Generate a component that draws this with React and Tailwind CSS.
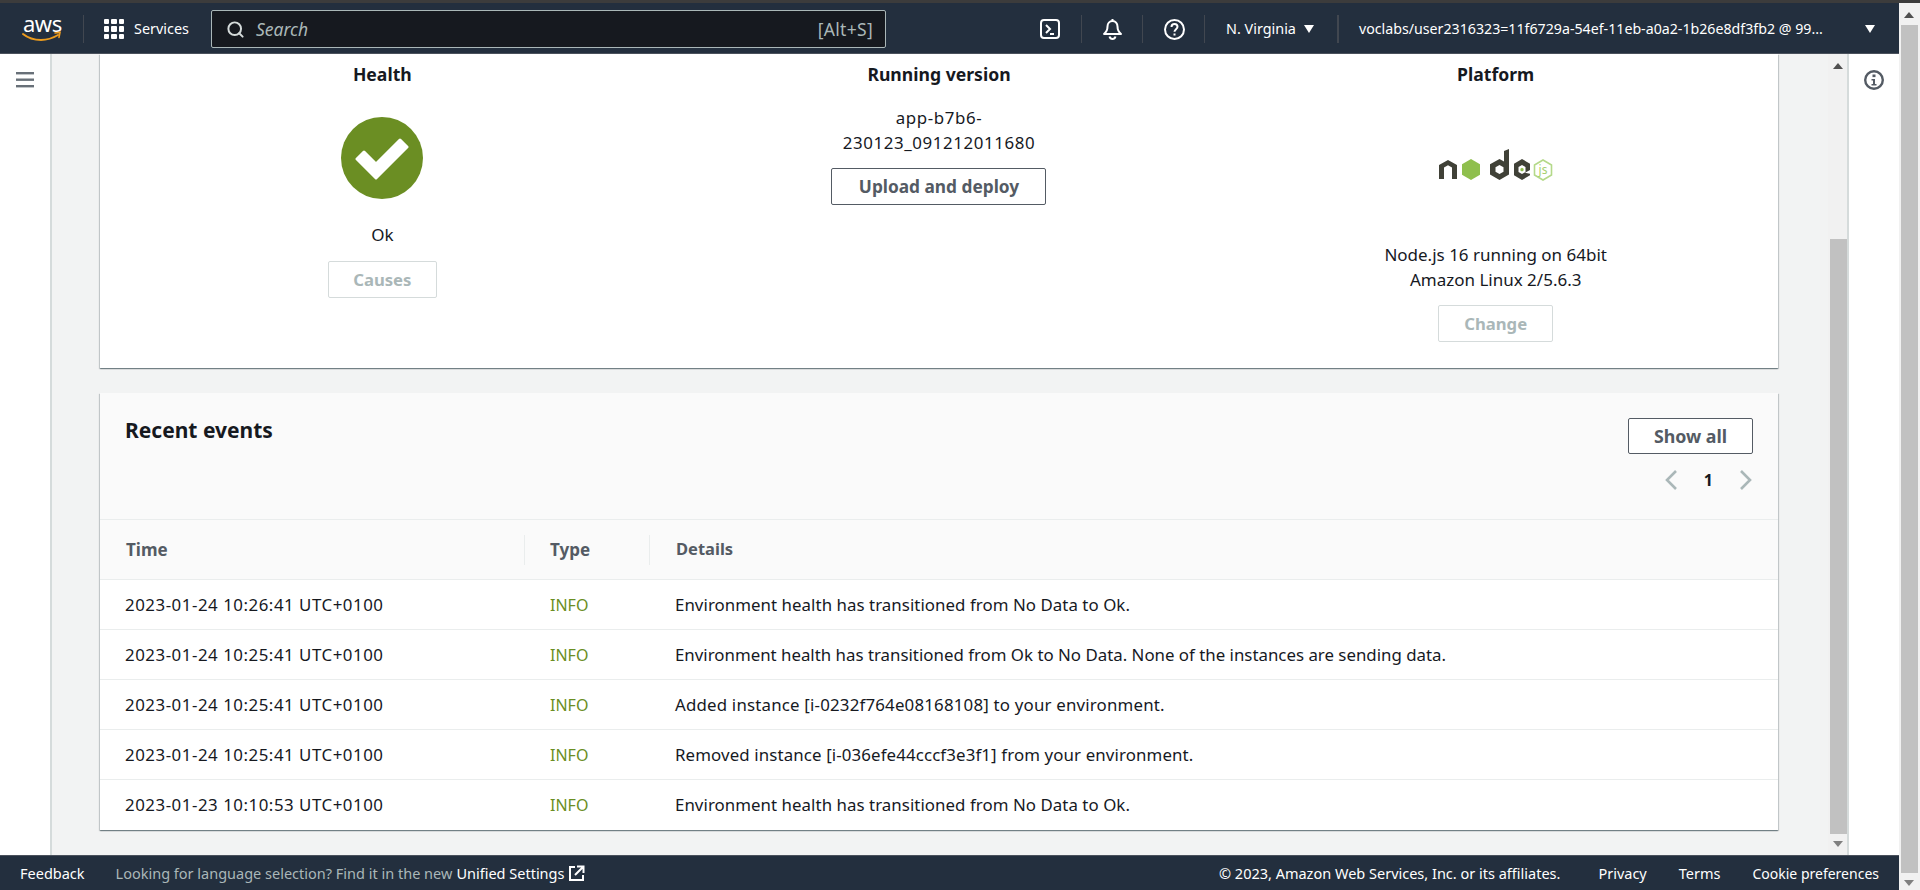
import { Search } from 'lucide-react'

const FONT = "font-['Noto_Sans','Open_Sans',sans-serif]"
const CARD_SHADOW = 'shadow-[0_1px_1px_0_rgba(0,28,36,0.35),1px_1px_1px_0_rgba(0,28,36,0.15),-1px_1px_1px_0_rgba(0,28,36,0.15)]'

const EVENTS = [
  ['2023-01-24 10:26:41 UTC+0100', 'Environment health has transitioned from No Data to Ok.', 'tracking-[0.05px]'],
  ['2023-01-24 10:25:41 UTC+0100', 'Environment health has transitioned from Ok to No Data. None of the instances are sending data.', ''],
  ['2023-01-24 10:25:41 UTC+0100', 'Added instance [i-0232f764e08168108] to your environment.', 'tracking-[0.19px]'],
  ['2023-01-24 10:25:41 UTC+0100', 'Removed instance [i-036efe44cccf3e3f1] from your environment.', 'tracking-[0.12px]'],
  ['2023-01-23 10:10:53 UTC+0100', 'Environment health has transitioned from No Data to Ok.', 'tracking-[0.05px]'],
]

function AwsLogo() {
  return (
    <div className="relative h-[30px] w-[40px]">
      <span className="absolute left-[1px] top-[-6px] text-[22px] leading-[30px] tracking-[-0.5px] text-white">aws</span>
      <svg className="absolute left-0 top-[17px]" width="40" height="13" viewBox="0 0 40 13" fill="none">
        <path d="M1 3c5 4 11 6 18 6 6 0 12-2 17-5" stroke="#ec9c1e" strokeWidth="2" strokeLinecap="round" />
        <path d="M33 2l5-.6-1 5" stroke="#ec9c1e" strokeWidth="1.6" strokeLinecap="round" />
      </svg>
    </div>
  )
}

function GridIcon() {
  return (
    <div className="grid h-[20px] w-[20px] grid-cols-3 gap-[2px]">
      {[0, 1, 2, 3, 4, 5, 6, 7, 8].map(i => (
        <span key={i} className="rounded-[1px] bg-white" />
      ))}
    </div>
  )
}

function Caret({ className }) {
  return (
    <svg className={className} width="10" height="8" viewBox="0 0 10 8">
      <path d="M0 0h10L5 8z" fill="#fff" />
    </svg>
  )
}

function Divider({ className }) {
  return <span className={`h-[28px] w-px bg-[#414750] ${className}`} />
}

function TopBar() {
  return (
    <header className="flex h-[51px] shrink-0 items-center border-b border-[#4a515c] bg-[#232f3e] pt-[2px] text-[14.4px] text-white">
      <div className="ml-[22px]"><AwsLogo /></div>
      <Divider className="ml-[21px]" />
      <div className="ml-[20px]"><GridIcon /></div>
      <span className="ml-[10px] w-[57px] whitespace-nowrap">Services</span>
      <div className="ml-[20px] flex h-[38px] w-[675px] items-center rounded-[2px] border border-[#aab7b8] bg-[#16191f] pl-[14px] pr-[12px] text-[17.5px] text-[#aab7b8]">
        <Search size={19} strokeWidth={2.5} className="text-[#d5dbdb]" />
        <span className="ml-[11px] italic">Search</span>
        <span className="ml-auto tracking-[0.3px]">[Alt+S]</span>
      </div>
      {/* terminal */}
      <svg className="ml-[154px]" width="20" height="20" viewBox="0 0 20 20" fill="none">
        <rect x="1" y="1" width="18" height="18" rx="3" stroke="#fff" strokeWidth="2" />
        <path d="M6 6l4 4-4 4M10 15h4" stroke="#fff" strokeWidth="2" />
      </svg>
      <Divider className="ml-[21px]" />
      {/* bell */}
      <svg className="ml-[20px]" width="21" height="22" viewBox="0 0 21 22" fill="none">
        <path d="M10.5 1v2M10.5 3c-3 0-5 2.400-5 5.500 0 3.500-1 5.500-3.500 7.500h17c-2.500-2-3.500-4-3.500-7.500C15.500 5.400 13.500 3 10.500 3z" stroke="#fff" strokeWidth="2" strokeLinejoin="round" />
        <path d="M7.500 18.500c.5 1.700 1.500 2.500 3 2.500s2.500-.8 3-2.500" stroke="#fff" strokeWidth="2" />
      </svg>
      <Divider className="ml-[19px]" />
      {/* help */}
      <svg className="ml-[21px]" width="21" height="21" viewBox="0 0 21 21" fill="none">
        <circle cx="10.500" cy="10.500" r="9.500" stroke="#fff" strokeWidth="2" />
        <path d="M7.500 8c0-2 1.300-3 3-3s3 1 3 2.800c0 2.400-3 2.400-3 5" stroke="#fff" strokeWidth="2" />
        <rect x="9.500" y="14.500" width="2" height="2" fill="#fff" />
      </svg>
      <Divider className="ml-[19px]" />
      <span className="ml-[21px] w-[71px] whitespace-nowrap">N. Virginia</span>
      <Caret className="ml-[7px]" />
      <span className="ml-[23px] h-[28px] w-[2px] bg-[#414750]" />
      <span className="ml-[20px] w-[498px] whitespace-nowrap text-[14.2px]">voclabs/user2316323=11f6729a-54ef-11eb-a0a2-1b26e8df3fb2 @ 99...</span>
      <Caret className="ml-[8px]" />
    </header>
  )
}

function Footer() {
  return (
    <footer className="flex h-[35px] shrink-0 items-center border-t border-[#4a515c] bg-[#232f3e] pt-[1px] text-[14.5px] text-white">
      <span className="ml-[20px]">Feedback</span>
      <span className="ml-[31px] text-[#aab7b8]">Looking for language selection? Find it in the new</span>
      <span className="ml-[4px]">Unified Settings</span>
      <svg className="ml-[4px]" width="17" height="17" viewBox="0 0 17 17" fill="none">
        <path d="M7 2H2v13h13v-5" stroke="#fff" strokeWidth="2" />
        <path d="M9 1.500h6.500V8M15 2L7 10" stroke="#fff" strokeWidth="2" />
      </svg>
      <span className="ml-auto">© 2023, Amazon Web Services, Inc. or its affiliates.</span>
      <span className="ml-[38px]">Privacy</span>
      <span className="ml-[32px]">Terms</span>
      <span className="ml-[32px] mr-[20px] text-[14px]">Cookie preferences</span>
    </footer>
  )
}

function OutlineButton({ children, className }) {
  return (
    <div className={`flex items-center justify-center rounded-[2px] border font-bold ${className}`}>
      {children}
    </div>
  )
}

function NodeLogo() {
  return (
    <svg className="block" width="114" height="33" viewBox="0 0 114 33">
      {/* n */}
      <path d="M0 31V17l9-5 9 5v14h-5V19.500l-4-2.300-4 2.300V31z" fill="#404137" />
      {/* o */}
      <path d="M32 11l9 5.250v10.500L32 32l-9-5.250V16.250z" fill="#8fbf4d" />
      {/* d */}
      <path d="M70 1v25.500L60.500 32 51 26.500V16.250L60.500 11 65 13.500V3zM60.500 17l-4 2.300v4.400l4 2.300 4-2.300v-4.400z" fillRule="evenodd" fill="#404137" />
      {/* e */}
      <path d="M83 11l8 4.700v6.300l-5 2.800 5 1v1.500L83 32l-8-4.700V15.700zM83 17l-3.500 2v5l3.500 2 3.500-2v-5z" fillRule="evenodd" fill="#404137" />
      <path d="M83 19.800l1.600 1v1.800l-1.600 1-1.600-1v-1.800z" fill="#8fbf4d" />
      {/* js */}
      <path d="M104 12l8.500 5v10l-8.500 5-8.500-5V17z" fill="none" stroke="#b4d98a" strokeWidth="1.600" />
      <text x="104" y="26" textAnchor="middle" fontSize="12" fontFamily="Noto Sans, sans-serif" fill="#a5d06e">js</text>
    </svg>
  )
}

function HealthCard() {
  return (
    <section className={`grid h-[314px] shrink-0 grid-cols-3 bg-white px-[4px] pt-[8px] text-center text-[17px] text-[#16191f] ${CARD_SHADOW}`}>
      <div className="flex flex-col items-center">
        <h3 className="text-[17.6px] font-bold leading-[24px]">Health</h3>
        <div className="mt-[31px] flex h-[82px] w-[82px] items-center justify-center rounded-full bg-[#6b8e23]">
          <svg width="56" height="43" viewBox="0 0 56 43">
            <path d="M3 22l7-7 12 12L46 3l7 7-31 31z" fill="#fff" stroke="#fff" strokeWidth="3" strokeLinejoin="round" />
          </svg>
        </div>
        <p className="mt-[24px] leading-[24px]">Ok</p>
        <OutlineButton className="mt-[14px] h-[37px] w-[109px] border-[#d5dbdb] text-[16.7px] text-[#aab7b8]">Causes</OutlineButton>
      </div>
      <div className="flex flex-col items-center">
        <h3 className="text-[17.6px] font-bold leading-[24px]">Running version</h3>
        <p className="mt-[19px] text-[16.85px] leading-[25px] tracking-[0.6px]">app-b7b6-<br />230123_091212011680</p>
        <OutlineButton className="mt-[13px] h-[37px] w-[215px] border-[#545b64] text-[17.3px] text-[#545b64]">Upload and deploy</OutlineButton>
      </div>
      <div className="flex flex-col items-center">
        <h3 className="text-[17.6px] font-bold leading-[24px]">Platform</h3>
        <div className="mt-[62px]"><NodeLogo /></div>
        <p className="mt-[61px] leading-[25px]">Node.js 16 running on 64bit<br />Amazon Linux 2/5.6.3</p>
        <OutlineButton className="mt-[13px] h-[37px] w-[115px] border-[#d5dbdb] text-[16.7px] text-[#aab7b8]">Change</OutlineButton>
      </div>
    </section>
  )
}

function Chevron({ d }) {
  return (
    <svg width="12" height="20" viewBox="0 0 12 20" fill="none">
      <path d={d} stroke="#aab7b8" strokeWidth="2.600" />
    </svg>
  )
}

function EventsCard() {
  return (
    <section className={`mt-[25px] shrink-0 bg-white text-[16.85px] text-[#16191f] ${CARD_SHADOW}`}>
      <div className="flex h-[127px] justify-between border-b border-[#eaeded] bg-[#fafafa] pl-[25px] pr-[25px]">
        <h2 className="mt-[22px] text-[21px] font-bold leading-[30px]">Recent events</h2>
        <div className="mt-[25px] flex flex-col items-end">
          <OutlineButton className="h-[36px] w-[125px] border-[#545b64] bg-white text-[17.8px] text-[#545b64]">Show all</OutlineButton>
          <div className="mr-[1px] mt-[16px] flex items-center">
            <Chevron d="M11 1L2 10l9 9" />
            <span className="mx-[27px] text-[16px] font-bold leading-[20px] text-[#16191f]">1</span>
            <Chevron d="M1 1l9 9-9 9" />
          </div>
        </div>
      </div>
      <div className="flex h-[60px] items-center border-b border-[#eaeded] bg-[#fafafa] text-[17px] font-bold text-[#545b64]">
        <span className="w-[425px] border-r border-[#eaeded] pl-[26px] leading-[30px]">Time</span>
        <span className="w-[125px] border-r border-[#eaeded] pl-[25px] leading-[30px]">Type</span>
        <span className="pl-[26px] text-[16.5px]">Details</span>
      </div>
      {EVENTS.map(([time, detail, spacing], i) => (
        <div key={i} className={`flex h-[50px] items-center ${i < EVENTS.length - 1 ? 'border-b border-[#eaeded]' : ''}`}>
          <span className="w-[425px] pl-[25px] tracking-[0.53px]">{time}</span>
          <span className="w-[125px] pl-[25px] text-[16px] text-[#6b8e23]">INFO</span>
          <span className={`pl-[25px] ${spacing}`}>{detail}</span>
        </div>
      ))}
    </section>
  )
}

// classic scrollbar with arrow glyphs, the thumb is placed by a spacer above it
function Scrollbar({ topGap, thumbH, className, arrowTop, arrowBottom }) {
  return (
    <div className={`flex shrink-0 flex-col items-end ${className}`}>
      <div className="flex w-full items-center justify-center" style={{ height: topGap }}>
        <svg className="mb-auto" style={{ marginTop: arrowTop }} width="10" height="6" viewBox="0 0 10 6"><path d="M5 0l5 6H0z" fill="#505050" /></svg>
      </div>
      <div className="w-[17px] bg-[#c1c1c1]" style={{ height: thumbH }} />
      <div className="flex w-full justify-center" style={{ marginTop: arrowBottom }}>
        <svg width="10" height="6" viewBox="0 0 10 6"><path d="M0 0h10L5 6z" fill="#808080" /></svg>
      </div>
    </div>
  )
}

export default function App() {
  return (
    <div className={`flex h-[890px] w-[1920px] flex-col overflow-hidden bg-white ${FONT}`}>
      <div className="h-[3px] shrink-0 bg-[#3c3c3c]" />
      <div className="flex min-h-0 flex-1">
        <div className="flex w-[1899px] flex-col">
          <TopBar />
          <div className="flex min-h-0 flex-1">
            {/* left nav */}
            <div className="flex w-[52px] shrink-0 justify-center border-r-2 border-[#d5dbdb] bg-white pt-[18px]">
              <svg width="18" height="16" viewBox="0 0 18 16" fill="#687078">
                <rect width="18" height="2.400" />
                <rect y="6.500" width="18" height="2.400" />
                <rect y="13" width="18" height="2.400" />
              </svg>
            </div>
            {/* main */}
            <main className="flex w-[1795px] shrink-0 bg-[#f2f3f3]">
              <div className="flex w-[1776px] shrink-0 flex-col pl-[48px] pr-[50px]">
                <HealthCard />
                <EventsCard />
              </div>
              <Scrollbar topGap={185} thumbH={595} arrowTop={9} arrowBottom={7} className="w-[19px] bg-[#f1f1f1]" />
            </main>
            {/* info rail */}
            <div className="flex flex-1 justify-center border-l-2 border-[#d5dbdb] bg-white pt-[16px]">
              <svg className="h-[20px] w-[20px]" viewBox="0 0 20 20" fill="none">
                <circle cx="10" cy="10" r="8.800" stroke="#545b64" strokeWidth="2.400" />
                <rect x="8.500" y="4.500" width="3" height="2.600" fill="#545b64" />
                <path d="M7.500 9h3.500v5h1.500v1.500h-5V14H9v-3.500H7.500z" fill="#545b64" />
              </svg>
            </div>
          </div>
          <Footer />
        </div>
        <Scrollbar topGap={22} thumbH={848} arrowTop={9} arrowBottom={7} className="w-[21px] bg-[#f1f1f1] pr-[2px]" />
      </div>
    </div>
  )
}
